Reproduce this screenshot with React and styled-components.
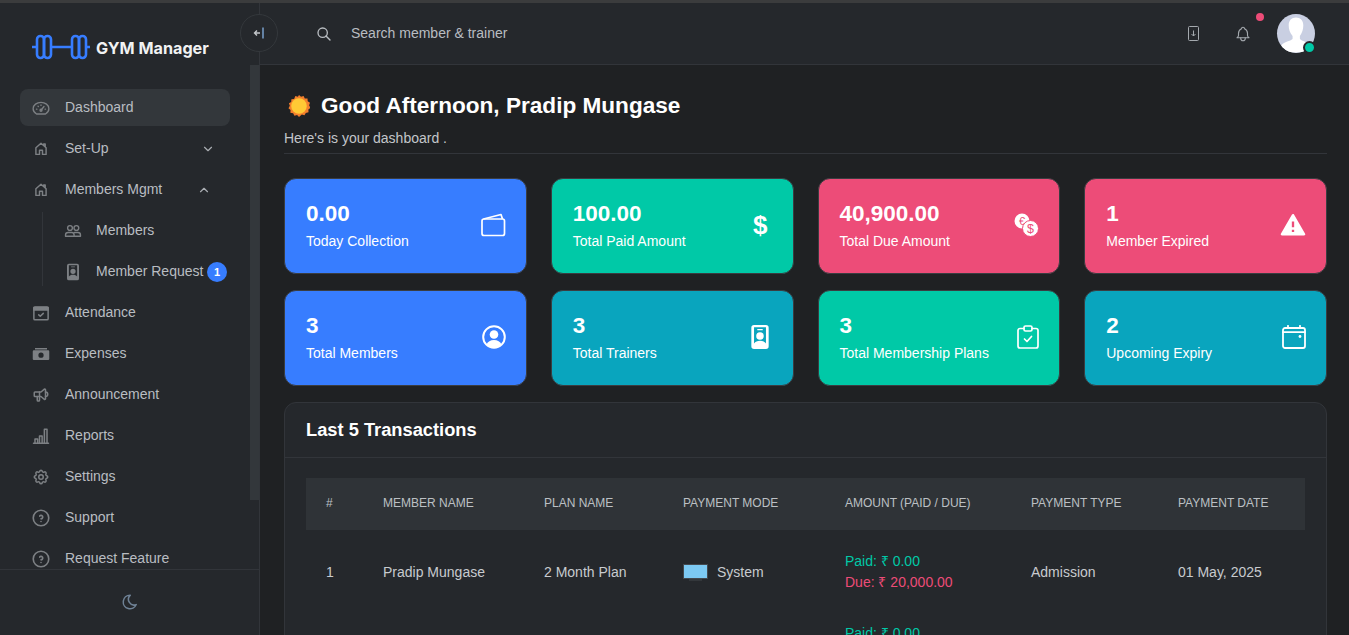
import React from 'react';
import styled, { createGlobalStyle } from 'styled-components';
import { TbSpeakerphone, TbSettings, TbHelpCircle, TbMoon, TbSearch, TbBell, TbChevronDown, TbChevronUp } from 'react-icons/tb';
import { RiAlertFill } from 'react-icons/ri';

const GlobalStyle = createGlobalStyle`
  html, body { margin: 0; padding: 0; height: 100%; overflow: hidden; background: #1f2123; }
  body { font-family: "Liberation Sans", Arial, sans-serif; font-size: 14px; }
  * { box-sizing: border-box; }
`;

const Shell = styled.div`
  height: 100vh;
  display: flex;
  flex-direction: column;
  border-top: 3px solid #3b3c3d;
  overflow: hidden;
`;

const Columns = styled.div`
  flex: 1;
  min-height: 0;
  display: flex;
`;

const Sidebar = styled.aside`
  position: relative;
  width: 260px;
  flex: none;
  display: flex;
  flex-direction: column;
  background: #25282c;
  border-right: 1px solid #32353a;
`;

const ScrollThumb = styled.div`
  position: absolute;
  right: 0;
  top: 62px;
  width: 9px;
  height: 435px;
  background: #33373b;
`;

const Brand = styled.div`
  height: 62px;
  flex: none;
  display: flex;
  align-items: flex-end;
  gap: 6px;
  padding: 0 0 5px 32px;
`;

const BrandName = styled.span`
  font-family: Inter, "Liberation Sans", sans-serif;
  font-size: 16.2px;
  font-weight: 700;
  line-height: 24px;
  color: #f1f2f3;
`;

const Nav = styled.nav`
  flex: 1;
  min-height: 0;
  overflow: hidden;
  padding: 24px 29px 0 20px;
  display: flex;
  flex-direction: column;
  gap: 4px;
`;

const NavItem = styled.a`
  flex: none;
  height: 37px;
  display: flex;
  align-items: center;
  padding: 0 12px;
  gap: 15px;
  border-radius: 8px;
  color: #b9bdc2;
  background: ${(p) => (p.$active ? '#33373b' : 'transparent')};

  svg.icon {
    width: 18px;
    height: 18px;
    flex: none;
    color: #7d8084;
  }
`;

const NavLabel = styled.span`
  flex: 1;
  white-space: nowrap;
  padding-bottom: 2px;
`;

const Caret = styled.span`
  display: flex;
  color: #a9adb2;
  margin-right: ${(p) => p.$right}px;
`;

const SubList = styled.div`
  flex: none;
  display: flex;
  flex-direction: column;
  gap: 4px;
  margin-left: 22px;
  position: relative;

  &::before {
    content: '';
    position: absolute;
    left: 0;
    top: 0;
    height: 74px;
    width: 1px;
    background: #32353a;
  }

  ${NavItem} {
    padding-left: 22px;
    padding-right: 3px;
    gap: 14px;
  }
`;

const Badge = styled.span`
  width: 20px;
  height: 20px;
  flex: none;
  margin-left: -12px;
  border-radius: 50%;
  background: #377dff;
  color: #fff;
  font-size: 11px;
  font-weight: 700;
  display: flex;
  align-items: center;
  justify-content: center;
`;

const SideFoot = styled.div`
  height: 66px;
  flex: none;
  padding-bottom: 2px;
  border-top: 1px solid #32353a;
  display: flex;
  align-items: center;
  justify-content: center;
  color: #6f8296;
`;

const Main = styled.main`
  flex: 1;
  min-width: 0;
  display: flex;
  flex-direction: column;
`;

const Topbar = styled.header`
  height: 62px;
  flex: none;
  position: relative;
  display: flex;
  align-items: center;
  padding: 0 34px 0 56px;
  background: #25282c;
  border-bottom: 1px solid #32353a;
`;

const Collapse = styled.button`
  position: absolute;
  left: -20px;
  top: 11px;
  width: 38px;
  height: 38px;
  padding: 0;
  border-radius: 50%;
  border: 1px solid #34383c;
  background: #25282c;
  display: flex;
  align-items: center;
  justify-content: center;
`;

const Search = styled.div`
  flex: 1;
  display: flex;
  align-items: center;
  gap: 19px;
  color: #b9bdc2;
`;

const SearchText = styled.span`
  padding-bottom: 2px;
`;

const TopActions = styled.div`
  display: flex;
  align-items: center;
  color: #a4a9ae;
`;

const BellWrap = styled.span`
  position: relative;
  display: flex;
  margin-left: 34px;
  margin-right: 25px;
  stroke-width: 1.5;

  svg { stroke-width: 1.5; }
`;

const BellDot = styled.span`
  position: absolute;
  top: -12px;
  right: -12px;
  width: 8px;
  height: 8px;
  border-radius: 50%;
  background: #ed4c78;
`;

const Avatar = styled.span`
  position: relative;
  width: 38px;
  height: 39px;
  display: block;
  border-radius: 50%;
  background: #c9cfe2;
`;

const AvatarClip = styled.span`
  display: block;
  width: 38px;
  height: 39px;
  border-radius: 50%;
  overflow: hidden;
`;

const Online = styled.span`
  position: absolute;
  right: -1px;
  bottom: -1px;
  width: 13px;
  height: 13px;
  border-radius: 50%;
  background: #00c9a7;
  border: 2px solid #25282c;
`;

const Content = styled.div`
  flex: 1;
  min-height: 0;
  overflow: hidden;
  padding: 26px 22px 0 24px;
`;

const Greeting = styled.h1`
  margin: 0;
  display: flex;
  align-items: center;
  gap: 11px;
  padding-left: 4px;
  font-size: 22.6px;
  line-height: 30px;
  font-weight: 700;
  color: #fff;
`;

const SubHead = styled.p`
  margin: 9px 0 0;
  padding-bottom: 7px;
  line-height: 16px;
  color: #c3c6ca;
  border-bottom: 1px solid #32353a;
`;

const CardGrid = styled.div`
  margin-top: 24px;
  display: grid;
  grid-template-columns: repeat(4, 1fr);
  column-gap: 24px;
  row-gap: 16px;
`;

const StatCard = styled.div`
  height: 96px;
  display: flex;
  align-items: center;
  justify-content: space-between;
  padding: 0 20px 2px 21px;
  border-radius: 12px;
  border: 1px solid #3a3d41;
  background: ${(p) => p.$bg};
  color: #fff;
`;

const StatValue = styled.div`
  font-size: 22.5px;
  line-height: 28px;
  font-weight: 700;
`;

const StatLabel = styled.div`
  margin-top: 5px;
  font-size: 14px;
  line-height: 17px;
  white-space: nowrap;
`;

const DollarGlyph = styled.span`
  font-size: 26px;
  font-weight: 700;
  line-height: 30px;
  margin-right: 5px;
`;

const AlertGlyph = styled(RiAlertFill)`
  margin-right: -1px;
`;

const TableCard = styled.section`
  margin-top: 16px;
  border: 1px solid #32353a;
  border-radius: 12px;
  background: #25282c;
`;

const TableTitle = styled.h2`
  margin: 0;
  height: 55px;
  padding: 0 21px;
  display: flex;
  align-items: center;
  font-size: 18.3px;
  font-weight: 700;
  color: #fff;
  border-bottom: 1px solid #32353a;
`;

const TableWrap = styled.div`
  padding: 20px 21px;
`;

const Table = styled.table`
  width: 100%;
  table-layout: fixed;
  border-collapse: collapse;
  color: #c8cbcf;

  tbody::before {
    content: '';
    display: block;
    height: 6px;
  }
`;

const Col = styled.col`
  width: ${(p) => p.$w}px;
`;

const Th = styled.th`
  height: 52px;
  padding: 0 20px 2px;
  background: #2f3337;
  text-align: left;
  font-size: 12px;
  font-weight: 400;
  color: #bcc0c4;
  white-space: nowrap;
`;

const Td = styled.td`
  height: 72px;
  padding: 0 20px;
  white-space: nowrap;
`;

const ModeCell = styled.span`
  display: flex;
  align-items: center;
  gap: 9px;
`;

const AmountStack = styled.div`
  min-height: 42px;
`;

const Amount = styled.div`
  line-height: 21px;
  color: ${(p) => (p.$due ? '#ed4c78' : '#00c9a7')};
`;

const stroke = { fill: 'none', stroke: 'currentColor', strokeWidth: 1.8, strokeLinecap: 'round', strokeLinejoin: 'round' };

const GaugeIcon = () => (
  <svg className="icon" viewBox="0 0 24 24" {...stroke}>
    <path d="M6 20h12c2.200-1.400 4.500-4 4.500-7C22.500 8 17.500 4.500 12 4.500S1.500 8 1.500 13c0 3 2.300 5.600 4.500 7z" />
    <path d="M12 15l4-5M6 13.500h.5M8 9.500l.4.4M12 8v.5M18 13.500h-.5" />
    <circle cx="12" cy="15" r="1.300" />
  </svg>
);

const HomeIcon = () => (
  <svg className="icon" viewBox="-3 -3 30 30" {...stroke} strokeWidth="2.400">
    <path d="M12 2.500l8.500 7.500v11h-6v-7h-5v7h-6V10z" />
    <path d="M16.500 6V3.500h2.500v4.500" />
  </svg>
);

const UsersIcon = () => (
  <svg className="icon" viewBox="0 0 24 24" {...stroke}>
    <circle cx="8" cy="8" r="3.200" />
    <circle cx="16.500" cy="8" r="3.200" />
    <path d="M2 19v-1.500c0-2 1.600-3.500 3.500-3.500h5c1.900 0 3 1.500 3 3.500V19z" />
    <path d="M14 14h4.500c1.900 0 3.500 1.500 3.500 3.500V19h-8" />
  </svg>
);

const badgePath = 'M6.500 1h11A2.500 2.500 0 0 1 20 3.500v17a2.500 2.500 0 0 1-2.500 2.500h-11A2.500 2.500 0 0 1 4 20.500v-17A2.500 2.500 0 0 1 6.500 1zm0 2v15c1.200-1.700 3-2.500 5.500-2.500s4.300.8 5.500 2.500V3zM9.500 4.500h5v1.200h-5zM12 7.500a3.500 3.500 0 1 1 0 7 3.500 3.500 0 0 1 0-7z';

const BadgeIcon = () => (
  <svg className="icon" viewBox="0 0 24 24">
    <path fill="currentColor" fillRule="evenodd" d={badgePath} />
  </svg>
);

const TrainerIcon = () => (
  <svg width="26" height="26" viewBox="0 0 24 24">
    <path fill="#fff" fillRule="evenodd" d={badgePath} />
  </svg>
);

const CalCheckIcon = () => (
  <svg className="icon" viewBox="0 0 24 24" {...stroke} strokeWidth="2">
    <rect x="2.500" y="4" width="19" height="17" rx="1.500" />
    <path d="M2.500 4.500h19V8h-19z" fill="currentColor" />
    <path d="M9 14.500l2 1.800 4-3.800" />
  </svg>
);

const CashIcon = () => (
  <svg className="icon" viewBox="0 0 24 24">
    <path fill="currentColor" fillRule="evenodd" d="M4 4h16v2H4zM2.500 7h19A1.500 1.500 0 0 1 23 8.500v10a1.500 1.500 0 0 1-1.500 1.500h-19A1.500 1.500 0 0 1 1 18.500v-10A1.500 1.500 0 0 1 2.500 7zM12 10a3.500 3.500 0 1 0 0 7 3.500 3.500 0 0 0 0-7z" />
  </svg>
);

const BarsIcon = () => (
  <svg className="icon" viewBox="0 0 24 24" {...stroke} strokeWidth="2">
    <path d="M2 21.500h20M4 21v-5h3.500v5M10 21v-9h3.500v9M16.500 21V3H20v18" />
  </svg>
);

const HelpIcon = styled(TbHelpCircle)`
  stroke-width: 1.900;
  transform: scale(1.15);
`;

const LogoMark = () => (
  <svg width="58" height="26" viewBox="0 0 58 26" fill="none" stroke="#377dff" strokeWidth="2.600">
    <path d="M0 13h5M19 13h21M54 13h4" />
    <rect x="5" y="2" width="7" height="22" rx="3.400" />
    <rect x="12" y="2" width="7" height="22" rx="3.400" />
    <rect x="40" y="2" width="7" height="22" rx="3.400" />
    <rect x="47" y="2" width="7" height="22" rx="3.400" />
  </svg>
);

const CollapseIcon = () => (
  <svg width="14" height="12" viewBox="0 0 14 12" fill="none" strokeWidth="1.400">
    <path d="M8 6H2.500M5 3.500L2.500 6 5 8.500" stroke="#c3c6ca" />
    <path d="M11 .5v11" stroke="#7fa8d8" />
  </svg>
);

const PhoneDownIcon = () => (
  <svg width="13" height="15" viewBox="0 0 13 15" fill="none" stroke="currentColor">
    <rect x="1.500" y=".5" width="10" height="14" rx="1" />
    <path d="M6.500 4.500v5.500M4.500 8l2 2 2-2" />
  </svg>
);

const Sun = () => (
  <svg width="22" height="22" viewBox="0 0 24 24">
    <path fill="#f37f2c" d="M12 0l2.200 2 2.800-1 1.300 2.700 3 .2.200 3 2.500 1.600-1 2.800 1.500 2.700-2.300 1.900.2 3-3 .6-1.400 2.600-2.900-.8L12 24l-2.100-2.200-2.900.8-1.400-2.600-3-.6.200-3L.5 14.500 2 11.800 1 9l2.500-1.500.2-3 3-.2L8 1l2.800 1z" />
    <circle cx="12" cy="12" r="8.500" fill="#ffc935" />
  </svg>
);

const AvatarFigure = () => (
  <svg width="38" height="39" viewBox="0 0 39 39">
    <path fill="#fff" d="M12 11c0-5 3-8 7.500-8s7.500 3 7.500 8c0 4-1.200 8-3.500 11v3c0 1.500 6 3 9 5 2 1.300 3 5 3 9H3c0-4 1-7.700 3-9 3-2 10-3.500 10-5v-3c-2.800-3-4-7-4-11z" />
  </svg>
);

const WalletIcon = () => (
  <svg width="25" height="24" viewBox="0 0 25 24" fill="none" stroke="#fff" strokeWidth="1.700" strokeLinejoin="round">
    <rect x="1" y="6" width="22.500" height="16.500" rx="2" />
    <path d="M2.500 6L20 1.500 21.500 6" />
  </svg>
);

const CoinsIcon = () => (
  <svg width="25" height="24" viewBox="0 0 25 24">
    <circle cx="8" cy="8" r="7.500" fill="#fff" />
    <text x="8" y="12" textAnchor="middle" fontSize="11" fill="#ed4c78" fontFamily="Liberation Sans">€</text>
    <circle cx="16.500" cy="15.500" r="8" fill="#fff" stroke="#ed4c78" />
    <text x="16.500" y="20" textAnchor="middle" fontSize="12.500" fill="#ed4c78" fontFamily="Liberation Sans">$</text>
  </svg>
);

const UserCircleIcon = () => (
  <svg width="24" height="24" viewBox="0 0 24 24">
    <circle cx="12" cy="12" r="10.800" fill="none" stroke="#fff" strokeWidth="2" />
    <circle cx="12" cy="9.500" r="4.300" fill="#fff" />
    <path fill="#fff" d="M4.500 19.500c1.200-3 4-4.500 7.500-4.500s6.300 1.500 7.500 4.500c-2 2-4.600 3.200-7.500 3.200s-5.500-1.200-7.500-3.200z" />
  </svg>
);

const ClipboardIcon = () => (
  <svg width="22" height="24" viewBox="0 0 22 24" fill="none" stroke="#fff" strokeWidth="1.700" strokeLinecap="round" strokeLinejoin="round">
    <path d="M7 3.500H3a2 2 0 0 0-2 2V21a2 2 0 0 0 2 2h16a2 2 0 0 0 2-2V5.500a2 2 0 0 0-2-2h-4" />
    <rect x="7" y="1" width="8" height="5" rx="1.500" />
    <path d="M7.500 14l2.500 2.500 4.500-5" />
  </svg>
);

const CalendarIcon = () => (
  <svg width="24" height="24" viewBox="0 0 24 24" fill="none" stroke="#fff" strokeWidth="1.800" strokeLinecap="round">
    <rect x="1" y="3" width="22" height="20" rx="2" />
    <path d="M1 7.200h22M6 .8v2M18 .8v2" />
    <circle cx="18" cy="11.500" r="1.400" fill="#fff" stroke="none" />
  </svg>
);

const Monitor = () => (
  <svg width="25" height="17" viewBox="0 0 25 17">
    <rect width="25" height="15" fill="#43484e" />
    <rect x="1" y="1" width="23" height="13" fill="#7cc9f3" />
    <rect x="6" y="15" width="13" height="2" fill="#33373b" />
  </svg>
);

const navBottom = [
  { label: 'Attendance', icon: <CalCheckIcon /> },
  { label: 'Expenses', icon: <CashIcon /> },
  { label: 'Announcement', icon: <TbSpeakerphone className="icon" /> },
  { label: 'Reports', icon: <BarsIcon /> },
  { label: 'Settings', icon: <TbSettings className="icon" /> },
  { label: 'Support', icon: <HelpIcon className="icon" /> },
  { label: 'Request Feature', icon: <HelpIcon className="icon" /> },
];

const stats = [
  { value: '0.00', label: 'Today Collection', bg: '#377dff', icon: <WalletIcon /> },
  { value: '100.00', label: 'Total Paid Amount', bg: '#00c9a7', icon: <DollarGlyph>$</DollarGlyph> },
  { value: '40,900.00', label: 'Total Due Amount', bg: '#ed4c78', icon: <CoinsIcon /> },
  { value: '1', label: 'Member Expired', bg: '#ed4c78', icon: <AlertGlyph size={28} /> },
  { value: '3', label: 'Total Members', bg: '#377dff', icon: <UserCircleIcon /> },
  { value: '3', label: 'Total Trainers', bg: '#09a5be', icon: <TrainerIcon /> },
  { value: '3', label: 'Total Membership Plans', bg: '#00c9a7', icon: <ClipboardIcon /> },
  { value: '2', label: 'Upcoming Expiry', bg: '#09a5be', icon: <CalendarIcon /> },
];

const columns = [
  ['#', 57], ['MEMBER NAME', 161], ['PLAN NAME', 139], ['PAYMENT MODE', 162],
  ['AMOUNT (PAID / DUE)', 186], ['PAYMENT TYPE', 147], ['PAYMENT DATE', 147],
];

export default function App() {
  return (
    <>
      <GlobalStyle />
      <Shell>
        <Columns>
          <Sidebar>
            <Brand>
              <LogoMark />
              <BrandName>GYM Manager</BrandName>
            </Brand>
            <Nav>
              <NavItem $active><GaugeIcon /><NavLabel>Dashboard</NavLabel></NavItem>
              <NavItem>
                <HomeIcon />
                <NavLabel>Set-Up</NavLabel>
                <Caret $right={3}><TbChevronDown size={14} /></Caret>
              </NavItem>
              <NavItem>
                <HomeIcon />
                <NavLabel>Members Mgmt</NavLabel>
                <Caret $right={7}><TbChevronUp size={14} /></Caret>
              </NavItem>
              <SubList>
                <NavItem><UsersIcon /><NavLabel>Members</NavLabel></NavItem>
                <NavItem><BadgeIcon /><NavLabel>Member Request</NavLabel><Badge>1</Badge></NavItem>
              </SubList>
              {navBottom.map((item) => (
                <NavItem key={item.label}>{item.icon}<NavLabel>{item.label}</NavLabel></NavItem>
              ))}
            </Nav>
            <ScrollThumb />
            <SideFoot><TbMoon size={18} /></SideFoot>
          </Sidebar>
          <Main>
            <Topbar>
              <Collapse><CollapseIcon /></Collapse>
              <Search><TbSearch size={16} /><SearchText>Search member &amp; trainer</SearchText></Search>
              <TopActions>
                <PhoneDownIcon />
                <BellWrap><TbBell size={18} /><BellDot /></BellWrap>
                <Avatar>
                  <AvatarClip><AvatarFigure /></AvatarClip>
                  <Online />
                </Avatar>
              </TopActions>
            </Topbar>
            <Content>
              <Greeting><Sun />Good Afternoon, Pradip Mungase</Greeting>
              <SubHead>Here's is your dashboard .</SubHead>
              <CardGrid>
                {stats.map((s) => (
                  <StatCard key={s.label} $bg={s.bg}>
                    <div>
                      <StatValue>{s.value}</StatValue>
                      <StatLabel>{s.label}</StatLabel>
                    </div>
                    {s.icon}
                  </StatCard>
                ))}
              </CardGrid>
              <TableCard>
                <TableTitle>Last 5 Transactions</TableTitle>
                <TableWrap>
                  <Table>
                    <colgroup>
                      {columns.map(([name, w]) => <Col key={name} $w={w} />)}
                    </colgroup>
                    <thead>
                      <tr>{columns.map(([name]) => <Th key={name}>{name}</Th>)}</tr>
                    </thead>
                    <tbody>
                      <tr>
                        <Td>1</Td>
                        <Td>Pradip Mungase</Td>
                        <Td>2 Month Plan</Td>
                        <Td><ModeCell><Monitor />System</ModeCell></Td>
                        <Td>
                          <AmountStack>
                            <Amount>Paid: ₹ 0.00</Amount>
                            <Amount $due>Due: ₹ 20,000.00</Amount>
                          </AmountStack>
                        </Td>
                        <Td>Admission</Td>
                        <Td>01 May, 2025</Td>
                      </tr>
                      <tr>
                        <Td />
                        <Td />
                        <Td />
                        <Td />
                        <Td>
                          <AmountStack>
                            <Amount>Paid: ₹ 0.00</Amount>
                          </AmountStack>
                        </Td>
                        <Td />
                        <Td />
                      </tr>
                    </tbody>
                  </Table>
                </TableWrap>
              </TableCard>
            </Content>
          </Main>
        </Columns>
      </Shell>
    </>
  );
}
